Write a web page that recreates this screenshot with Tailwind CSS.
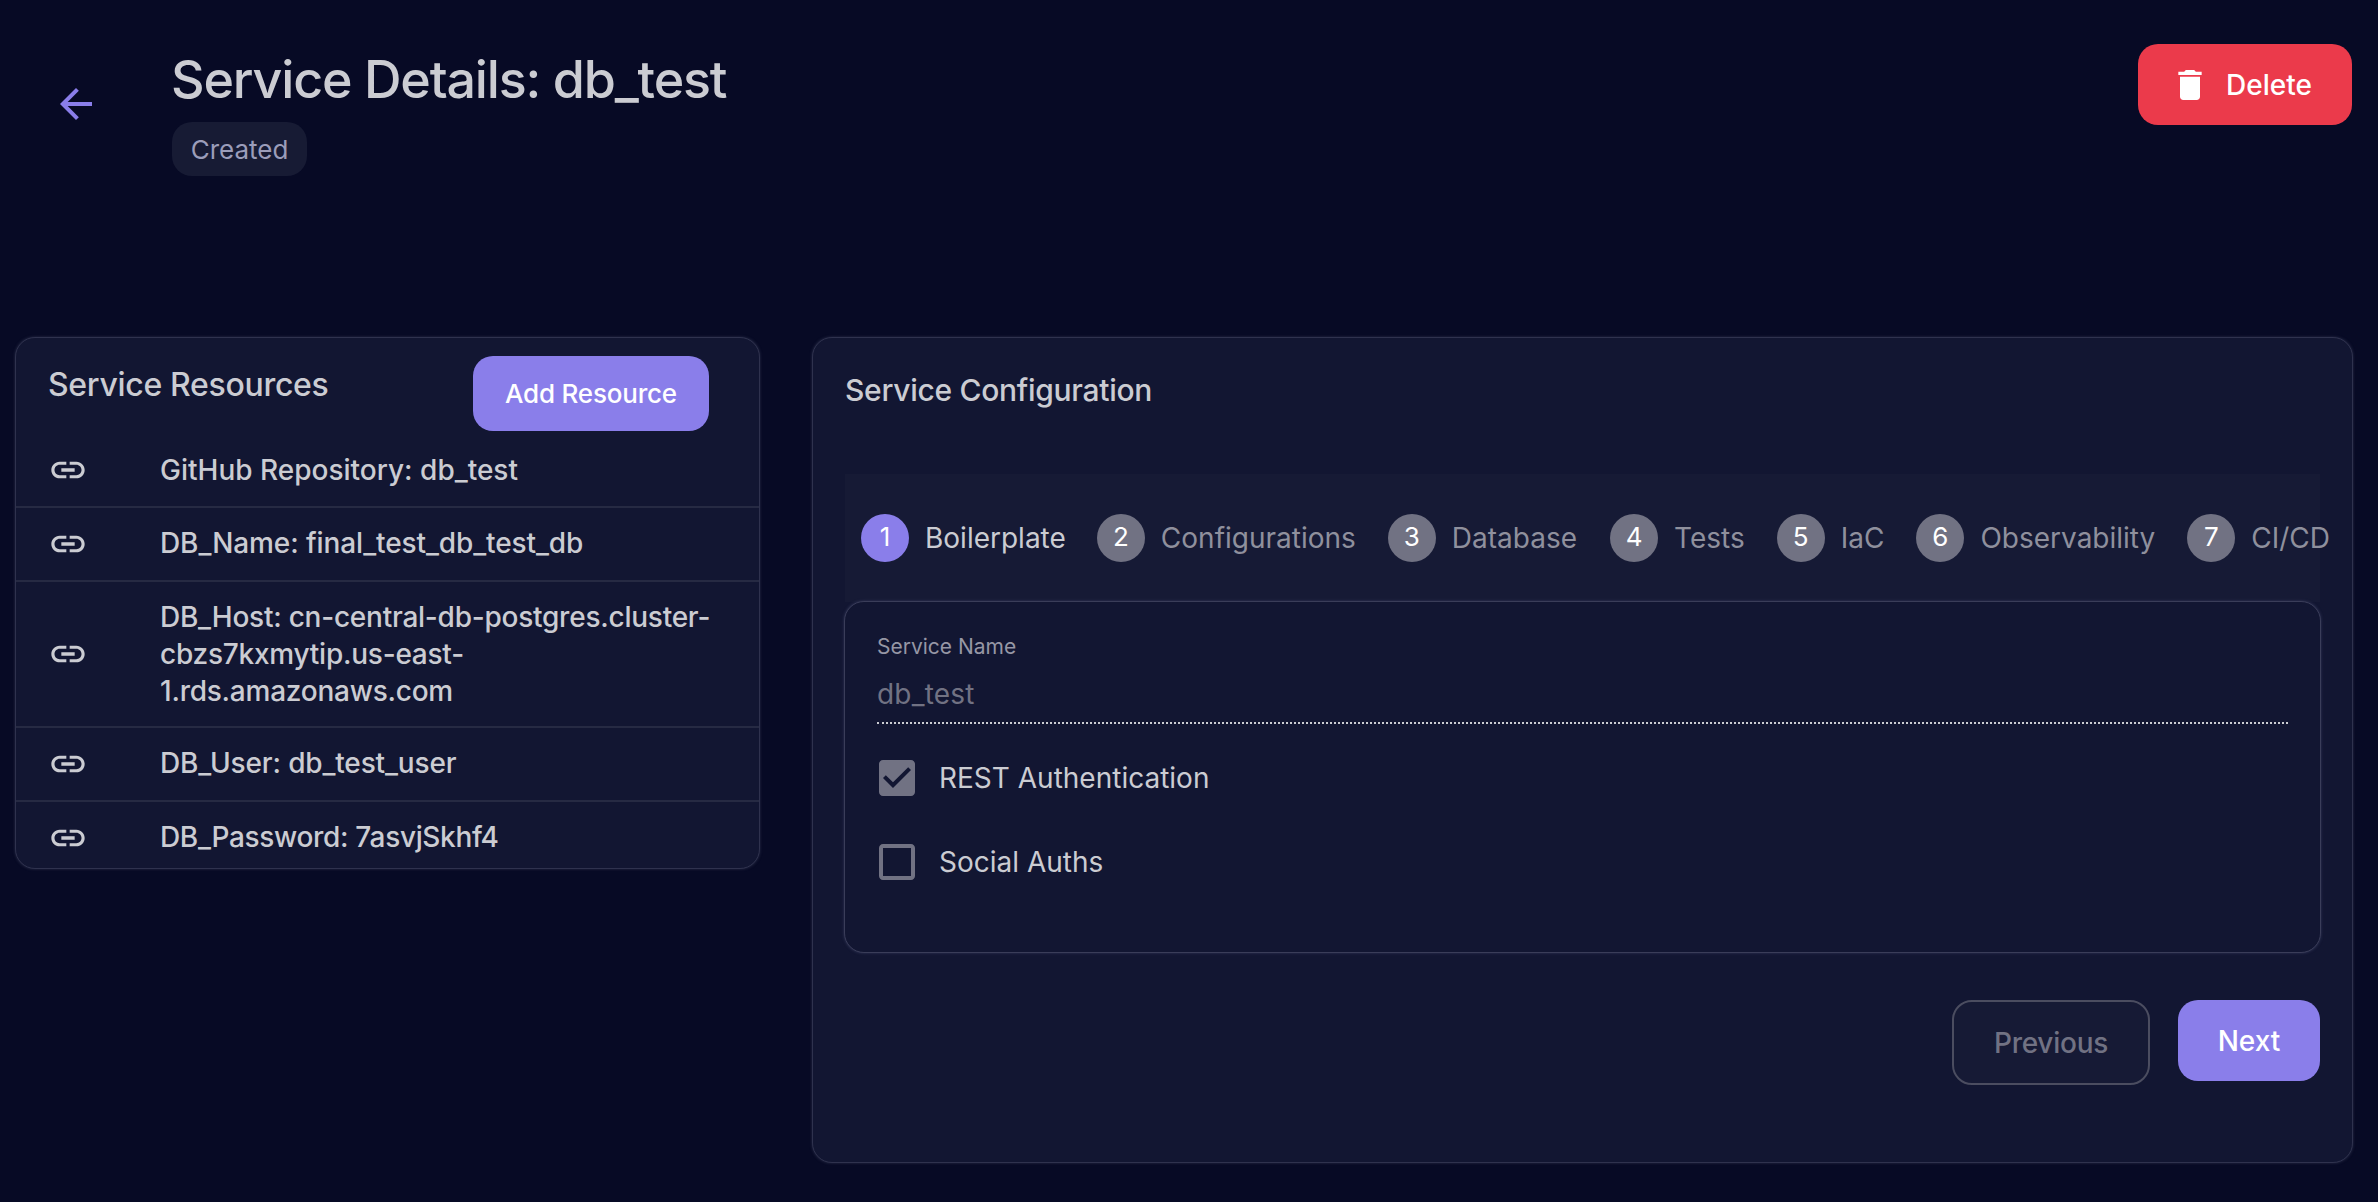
<!DOCTYPE html>
<html lang="en">
<head>
<meta charset="utf-8">
<title>Service Details</title>
<script src="https://cdn.jsdelivr.net/npm/@tailwindcss/browser@4"></script>
</head>
<body class="bg-[#070a25] font-['Inter',sans-serif] text-[#cbccd2] overflow-hidden">
<svg class="hidden">
  <symbol id="link" viewBox="0 0 24 24"><path d="M3.9 12c0-1.71 1.39-3.1 3.1-3.1h4V7H7c-2.76 0-5 2.24-5 5s2.24 5 5 5h4v-1.900H7c-1.710 0-3.100-1.390-3.100-3.100zM8 13h8v-2H8v2zm9-6h-4v1.900h4c1.710 0 3.100 1.390 3.100 3.100s-1.390 3.100-3.100 3.100h-4V17h4c2.760 0 5-2.240 5-5s-2.240-5-5-5z"/></symbol>
</svg>
<div class="flex h-[1202px] w-[2378px] flex-col">
  <header class="flex h-[337px] shrink-0 items-start pr-[26px] pl-[52px]">
    <button class="mt-20 text-[#8a7eea]"><svg class="size-12" viewBox="0 0 24 24" fill="currentColor"><path d="M20 11H7.830l5.590-5.590L12 4l-8 8 8 8 1.410-1.410L7.830 13H20v-2z"/></svg></button>
    <div class="mt-[50px] ml-[72px] flex flex-col items-start gap-3">
      <h1 class="-ml-px text-[52px] leading-[60px] font-medium tracking-[-1.180px] whitespace-nowrap">Service Details: db_test</h1>
      <span class="flex h-[54px] w-[135px] items-center justify-center rounded-[20px] bg-[#171b34] text-[26px] text-[#9b9dba]">Created</span>
    </div>
    <button class="mt-11 ml-auto flex h-[81px] w-[214px] items-center rounded-[20px] bg-[#eb3a4b] pl-8 text-[28px] font-medium text-white">
      <svg class="mr-4 size-10" viewBox="0 0 24 24" fill="currentColor"><path d="M6 19c0 1.100.9 2 2 2h8c1.100 0 2-.9 2-2V7H6v12zM19 4h-3.500l-1-1h-5l-1 1H5v2h14V4z"/></svg>Delete
    </button>
  </header>

  <main class="flex items-start gap-[52px] pl-[15px]">
    <section class="h-[532px] w-[745px] overflow-hidden rounded-[20px] border border-[#2f324e] bg-[#121632] shadow-[0_0_3px_#2b2f4a]">
      <div class="flex h-[94px] items-start justify-between pr-[50px] pl-8">
        <h2 class="mt-[27px] text-[32px] leading-[40px] font-medium tracking-[-0.310px]">Service Resources</h2>
        <button class="mt-[18px] h-[75px] w-[236px] rounded-[20px] bg-[#8a7eea] text-[26px] font-medium tracking-[-0.200px] text-white">Add Resource</button>
      </div>
      <ul class="text-[28px] leading-[37px] font-medium">
        <li class="flex h-[76px] items-center border-b-2 border-[#262a43] pt-0.5 pl-8"><svg class="mr-[72px] size-10 shrink-0" fill="currentColor"><use href="#link"/></svg><span>GitHub Repository: db_test</span></li>
        <li class="flex h-[74px] items-center border-b-2 border-[#262a43] pl-8"><svg class="mr-[72px] size-10 shrink-0" fill="currentColor"><use href="#link"/></svg><span class="pb-px tracking-[-0.100px]">DB_Name: final_test_db_test_db</span></li>
        <li class="flex h-[146px] items-center border-b-2 border-[#262a43] pl-8"><svg class="mr-[72px] size-10 shrink-0" fill="currentColor"><use href="#link"/></svg><span class="tracking-[-0.240px] whitespace-nowrap">DB_Host: cn-central-db-postgres.cluster-<br>cbzs7kxmytip.us-east-<br>1.rds.amazonaws.com</span></li>
        <li class="flex h-[74px] items-center border-b-2 border-[#262a43] pl-8"><svg class="mr-[72px] size-10 shrink-0" fill="currentColor"><use href="#link"/></svg><span class="pb-px tracking-[-0.150px]">DB_User: db_test_user</span></li>
        <li class="flex h-[72px] items-center pl-8"><svg class="mr-[72px] size-10 shrink-0" fill="currentColor"><use href="#link"/></svg><span class="pb-px tracking-[-0.340px]">DB_Password: 7asvjSkhf4</span></li>
      </ul>
    </section>

    <section class="h-[826px] w-[1541px] rounded-[20px] border border-[#2f324e] bg-[#121632] px-[31px] shadow-[0_0_3px_#2b2f4a]">
      <h2 class="mt-[32px] ml-px text-[30px] leading-[40px] font-medium tracking-[-0.290px]">Service Configuration</h2>
      <ol class="mt-[64px] ml-px flex h-32 w-[1475px] items-center gap-8 bg-[#161a35] pl-4 text-[28px] whitespace-nowrap text-[#8f909d]">
        <li class="-mr-px flex items-center gap-4"><span class="flex size-12 items-center justify-center rounded-full bg-[#8a7eea] pb-[3px] text-[26px] text-white">1</span><span class="text-[#cbccd2]">Boilerplate</span></li>
        <li class="flex items-center gap-4"><span class="flex size-12 items-center justify-center rounded-full bg-[#717283] pb-[3px] text-[26px] text-white">2</span><span>Configurations</span></li>
        <li class="mr-px flex items-center gap-4"><span class="flex size-12 items-center justify-center rounded-full bg-[#717283] pb-[3px] text-[26px] text-white">3</span><span>Database</span></li>
        <li class="flex items-center gap-4"><span class="flex size-12 items-center justify-center rounded-full bg-[#717283] pb-[3px] text-[26px] text-white">4</span><span>Tests</span></li>
        <li class="flex items-center gap-4"><span class="flex size-12 items-center justify-center rounded-full bg-[#717283] pb-[3px] text-[26px] text-white">5</span><span>IaC</span></li>
        <li class="flex items-center gap-4"><span class="flex size-12 items-center justify-center rounded-full bg-[#717283] pb-[3px] text-[26px] text-white">6</span><span>Observability</span></li>
        <li class="flex items-center gap-4"><span class="flex size-12 items-center justify-center rounded-full bg-[#717283] pb-[3px] text-[26px] text-white">7</span><span>CI/CD</span></li>
      </ol>
      <div class="-mt-px h-[352px] w-[1477px] rounded-[20px] border border-[#3a3d59] bg-[#121632] px-8 shadow-[0_0_3px_#34385a]">
        <div class="mt-[32px] text-[21px] leading-[26px] text-[#9697a5]">Service Name</div>
        <div class="mt-[16px] h-12 border-b-2 border-dotted border-[#cbccd2] text-[28px] leading-[37px] tracking-[0.200px] text-[#717283]">db_test</div>
        <label class="mt-[30px] flex items-center gap-[18px] text-[28px] leading-[48px]"><svg class="-ml-1 size-12" viewBox="0 0 24 24" fill="#717283"><path d="M19 3H5c-1.110 0-2 .9-2 2v14c0 1.100.89 2 2 2h14c1.110 0 2-.9 2-2V5c0-1.100-.89-2-2-2zm-9 14l-5-5 1.410-1.410L10 14.170l7.590-7.590L19 8l-9 9z"/></svg>REST Authentication</label>
        <label class="mt-9 flex items-center gap-[18px] text-[28px] leading-[48px]"><svg class="-ml-1 size-12" viewBox="0 0 24 24" fill="#717283"><path d="M19 5v14H5V5h14m0-2H5c-1.100 0-2 .9-2 2v14c0 1.100.9 2 2 2h14c1.100 0 2-.9 2-2V5c0-1.100-.9-2-2-2z"/></svg>Social Auths</label>
      </div>
      <div class="mt-[47px] flex items-start justify-end gap-7 pr-px text-[28px] font-medium">
        <button class="h-[85px] w-[198px] rounded-[20px] border-2 border-[#4b4d60] bg-[#161a35] tracking-[-0.250px] text-[#717283]">Previous</button>
        <button class="h-[81px] w-[142px] rounded-[20px] bg-[#8a7eea] text-white">Next</button>
      </div>
    </section>
  </main>
</div>
</body>
</html>
